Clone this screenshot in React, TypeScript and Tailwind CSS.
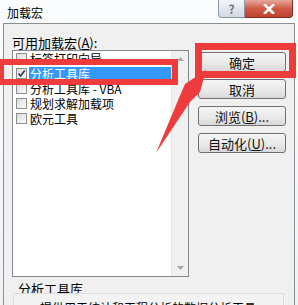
import React from 'react';

const items = [
    { label: '标签打印向导', checked: false },
    { label: '分析工具库', checked: true, selected: true },
    { label: '分析工具库 - VBA', checked: false },
    { label: '规划求解加载项', checked: false },
    { label: '欧元工具', checked: false },
];

function CheckBox({ checked }: { checked: boolean }) {
    return (
        <div className="w-[11px] h-[11px] shrink-0 border border-[#8f8f8f] bg-gradient-to-br from-[#dcdcdc] to-[#fbfbfb] flex items-center justify-center">
            {checked && (
                <svg width="9" height="9" viewBox="0 0 9 9">
                    <path d="M1.5 4.5 L3.6 7 L7.8 1.5" fill="none" stroke="#2a3b6e" strokeWidth="1.7" />
                </svg>
            )}
        </div>
    );
}

function Button({ children }: { children: React.ReactNode }) {
    return (
        <div className="w-[88px] h-[20px] rounded-[3px] border border-[#707070] bg-gradient-to-b from-[#f4f4f4] via-[#ebebeb] to-[#d9d9d9] flex items-center justify-center text-[13px] text-[#111] leading-none">
            {children}
        </div>
    );
}

export default function App() {
    return (
        <div
            className="relative w-[298px] h-[305px] overflow-hidden bg-gradient-to-b from-[#fbfcfd] to-[#eef2f6] flex flex-col text-black"
            style={{ fontFamily: '"Noto Sans CJK SC", "Noto Sans", sans-serif' }}
        >
            {/* title bar */}
            <div className="h-[23px] shrink-0 flex items-start justify-between">
                <div className="pl-[7px] pt-[6px] text-[12px] leading-[14px]">加载宏</div>
                <div className="flex mr-[5px]">
                    <div className="w-[27px] h-[18px] rounded-bl-[4px] border border-t-0 border-[#8a97a8] bg-gradient-to-b from-[#f3f5f8] to-[#d3d9e1] flex items-center justify-center text-[12px] font-bold text-[#6a7585] leading-none">
                        ?
                    </div>
                    <div className="w-[48px] h-[18px] rounded-br-[4px] border border-t-0 border-l-0 border-[#7a2a20] bg-gradient-to-b from-[#e6a89c] via-[#cf5a48] to-[#c3412f] flex items-center justify-center">
                        <svg width="12" height="10" viewBox="0 0 12 10">
                            <path d="M2 1 L10 9 M10 1 L2 9" stroke="#ffffff" strokeWidth="2.6" strokeLinecap="square" />
                        </svg>
                    </div>
                </div>
            </div>

            {/* dialog body */}
            <div className="flex-1 mx-[3px] border border-[#8e8f8f] bg-[#f0f0f0] flex flex-col">
                <div className="flex">
                    <div className="pl-[8px] pt-[11px] flex flex-col">
                        <div className="h-[15px] text-[13px] leading-[15px]">
                            可用加载宏(<span className="underline">A</span>):
                        </div>
                        <div className="w-[177px] h-[227px] border border-[#828790] bg-white flex">
                            <div className="flex-1 flex flex-col pl-[3px]">
                                {items.map(item => (
                                    <div key={item.label} className="h-[15px] flex items-center">
                                        <CheckBox checked={item.checked} />
                                        <div
                                            className={`ml-[2px] pl-[1px] flex-1 h-[14px] text-[12px] leading-[14px] whitespace-nowrap ${item.selected ? 'bg-[#3399ff] text-white' : ''}`}
                                        >
                                            {item.label}
                                        </div>
                                    </div>
                                ))}
                            </div>
                            <div className="w-[17px] bg-[#f0f0f0] border-l border-[#e4e4e4] flex flex-col justify-between items-center py-[6px]">
                                <svg width="7" height="4" viewBox="0 0 7 4">
                                    <path d="M0 4 L3.5 0 L7 4 Z" fill="#a8a8a8" />
                                </svg>
                                <svg width="7" height="4" viewBox="0 0 7 4">
                                    <path d="M0 0 L3.5 4 L7 0 Z" fill="#a8a8a8" />
                                </svg>
                            </div>
                        </div>
                    </div>
                    <div className="ml-[9px] pt-[28px] flex flex-col gap-[7px]">
                        <Button>确定</Button>
                        <Button>取消</Button>
                        <Button>
                            浏览(<span className="underline">B</span>)...
                        </Button>
                        <Button>
                            自动化(<span className="underline">U</span>)...
                        </Button>
                    </div>
                </div>

                <div className="pl-[14px] mt-[5px] text-[13px] leading-[14px]">分析工具库</div>
                <div className="ml-[9px] mr-[10px] mt-[-3px] flex-1 border border-[#dcdcdc] border-b-0 rounded-t-[2px] bg-[#f3f3f3] pl-[26px] pt-[7px] text-[12px] leading-[14px] whitespace-nowrap">
                    提供用于统计和工程分析的数据分析工具
                </div>
            </div>

            {/* red annotations */}
            <div className="absolute left-[-2px] top-[59px] w-[180px] h-[26px] border-[6px] border-[#ee3b3b]" />
            <div className="absolute left-[195px] top-[43px] w-[101px] h-[35px] border-[7px] border-[#ee3b3b]" />
            <svg className="absolute left-0 top-0" width="298" height="305" viewBox="0 0 298 305">
                <polygon points="156,153 179,98 185,84 206,70 200,92 190,102" fill="#ee3b3b" />
            </svg>
        </div>
    );
}
